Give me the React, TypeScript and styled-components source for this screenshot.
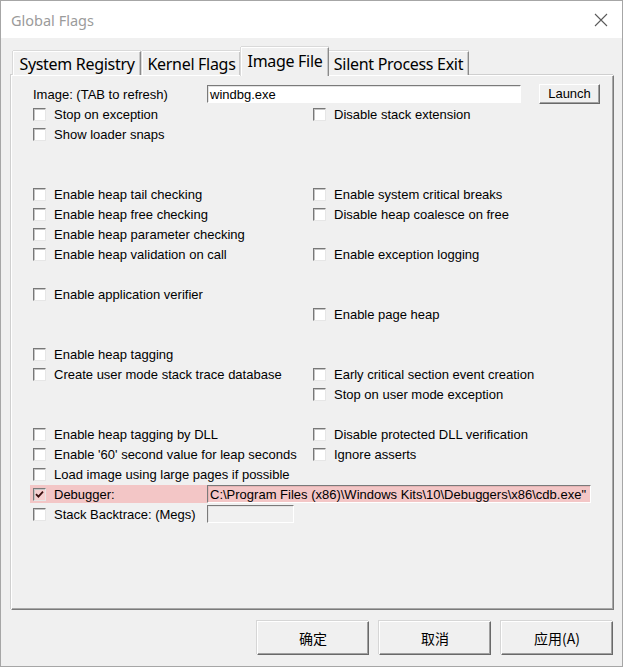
import React from "react"
import styled, { createGlobalStyle } from "styled-components"

const GlobalStyle = createGlobalStyle`
  html, body {
    margin: 0;
    padding: 0;
    background: #ffffff;
  }
  * {
    box-sizing: border-box;
  }
`

type Flag = string | null

const flagRows: [Flag, Flag][] = [
  ["Stop on exception", "Disable stack extension"],
  ["Show loader snaps", null],
  [null, null],
  [null, null],
  ["Enable heap tail checking", "Enable system critical breaks"],
  ["Enable heap free checking", "Disable heap coalesce on free"],
  ["Enable heap parameter checking", null],
  ["Enable heap validation on call", "Enable exception logging"],
  [null, null],
  ["Enable application verifier", null],
  [null, "Enable page heap"],
  [null, null],
  ["Enable heap tagging", null],
  ["Create user mode stack trace database", "Early critical section event creation"],
  [null, "Stop on user mode exception"],
  [null, null],
  ["Enable heap tagging by DLL", "Disable protected DLL verification"],
  ["Enable '60' second value for leap seconds", "Ignore asserts"],
  ["Load image using large pages if possible", null],
]

const tabs = [
  { label: "System Registry", width: 128 },
  { label: "Kernel Flags", width: 99 },
  { label: "Image File", width: 88 },
  { label: "Silent Process Exit", width: 141 },
]

const App = () => {
  return (
    <>
      <GlobalStyle />
      <Window>
        <TitleBar>
          <Title>Global Flags</Title>
          <CloseIcon width="14" height="14" viewBox="0 0 14 14">
            <path d="M1 1 L13 13 M13 1 L1 13" stroke="#5a5a5a" strokeWidth="1.1" fill="none" />
          </CloseIcon>
        </TitleBar>

        <Body>
          <TabStrip>
            {tabs.map((t) => (
              <Tab key={t.label} $active={t.label === "Image File"} $width={t.width}>
                {t.label}
              </Tab>
            ))}
          </TabStrip>

          <Panel>
            <FieldRow>
              <FieldLabel>Image: (TAB to refresh)</FieldLabel>
              <TextField $width={314}>windbg.exe</TextField>
              <SmallButton>Launch</SmallButton>
            </FieldRow>

            {flagRows.map(([left, right], i) => (
              <FlagRow key={i}>
                <Cell>{left && <CheckItem label={left} />}</Cell>
                <Cell>{right && <CheckItem label={right} />}</Cell>
              </FlagRow>
            ))}

            <DebuggerRow>
              <LabelBlock>
                <CheckBox $tint>
                  <svg width="9" height="9" viewBox="0 0 9 9">
                    <path d="M1 4.2 L3.4 6.6 L8 1.6" stroke="#3a1010" strokeWidth="1.8" fill="none" />
                  </svg>
                </CheckBox>
                <CheckLabel>Debugger:</CheckLabel>
              </LabelBlock>
              <TextField $width={384} $tint>
                C:\Program Files (x86)\Windows Kits\10\Debuggers\x86\cdb.exe"
              </TextField>
            </DebuggerRow>

            <FieldRow>
              <LabelBlock>
                <CheckBox />
                <CheckLabel>Stack Backtrace: (Megs)</CheckLabel>
              </LabelBlock>
              <TextField $width={87} $disabled />
            </FieldRow>
          </Panel>

          <ButtonBar>
            <DialogButton>确定</DialogButton>
            <DialogButton>取消</DialogButton>
            <DialogButton>应用(A)</DialogButton>
          </ButtonBar>
        </Body>
      </Window>
    </>
  )
}

const CheckItem = ({ label }: { label: string }) => (
  <CheckRow>
    <CheckBox />
    <CheckLabel>{label}</CheckLabel>
  </CheckRow>
)

export default App

const Window = styled.div`
  width: 623px;
  height: 667px;
  display: flex;
  flex-direction: column;
  border: 1px solid #a6a6a6;
  background: #f0f0f0;
  overflow: hidden;
`

const TitleBar = styled.div`
  height: 37px;
  flex: none;
  display: flex;
  align-items: center;
  justify-content: space-between;
  background: #ffffff;
  padding: 0 14px 0 10px;
`

const Title = styled.div`
  font-family: "Noto Sans", "Open Sans", sans-serif;
  font-size: 14.5px;
  color: #9b9b9b;
  margin-top: 1px;
`

const CloseIcon = styled.svg`
  display: block;
`

const Body = styled.div`
  flex: 1;
  display: flex;
  flex-direction: column;
  padding: 9px 9px 0 10px;
  font-family: "Liberation Sans", Arial, sans-serif;
  font-size: 13px;
  color: #000;
`

const TabStrip = styled.div`
  height: 28px;
  display: flex;
  align-items: flex-end;
  padding-left: 2px;
  position: relative;
  z-index: 1;
`

const Tab = styled.div<{ $active?: boolean; $width: number }>`
  width: ${(p) => p.$width}px;
  height: ${(p) => (p.$active ? 29 : 24)}px;
  margin: ${(p) => (p.$active ? "0 -1px -1px -1px" : "0 1px 0 0")};
  display: flex;
  align-items: center;
  justify-content: center;
  padding-bottom: ${(p) => (p.$active ? 3 : 0)}px;
  font-family: "Noto Sans", "Open Sans", sans-serif;
  font-size: 16px;
  letter-spacing: -0.3px;
  color: #000;
  background: #f0f0f0;
  border-top: 1px solid #ffffff;
  border-left: 1px solid #ffffff;
  border-right: 1px solid #8a8a8a;
  box-shadow: inset -1px 0 0 #c8c8c8, 0 -1px 0 #d9d9d9, -1px 0 0 #d9d9d9;
  position: relative;
  z-index: ${(p) => (p.$active ? 2 : 1)};
`

const Panel = styled.div`
  width: 603px;
  height: 535px;
  flex: none;
  border-top: 1px solid #ffffff;
  border-left: 1px solid #ffffff;
  border-right: 1px solid #7a7a7a;
  border-bottom: 1px solid #7a7a7a;
  box-shadow: -1px -1px 0 #cfcfcf, inset -1px -1px 0 #a8a8a8;
  padding: 8px 0 0 21px;
  display: flex;
  flex-direction: column;
`

const FieldRow = styled.div`
  height: 20px;
  display: flex;
  align-items: center;
`

const FieldLabel = styled.div`
  width: 174px;
  white-space: nowrap;
`

const TextField = styled.div<{ $width: number; $tint?: boolean; $disabled?: boolean }>`
  width: ${(p) => p.$width}px;
  height: 18px;
  flex: none;
  display: flex;
  align-items: center;
  padding-left: 2px;
  white-space: nowrap;
  overflow: hidden;
  background: ${(p) => (p.$tint ? "#f3c6c6" : p.$disabled ? "#f0f0f0" : "#ffffff")};
  border-top: 1px solid #7a7a7a;
  border-left: 1px solid #7a7a7a;
  border-right: 1px solid #ffffff;
  border-bottom: 1px solid #ffffff;
  box-shadow: inset 1px 1px 0 ${(p) => (p.$tint ? "#e6b5b5" : "#e3e3e3")};
`

const SmallButton = styled.div`
  width: 61px;
  height: 20px;
  margin-left: 18px;
  display: flex;
  align-items: center;
  justify-content: center;
  padding-bottom: 1px;
  background: #f0f0f0;
  border-top: 1px solid #ffffff;
  border-left: 1px solid #ffffff;
  border-right: 1px solid #696969;
  border-bottom: 1px solid #696969;
  box-shadow: inset -1px -1px 0 #a0a0a0;
`

const FlagRow = styled.div`
  height: 20px;
  display: grid;
  grid-template-columns: 280px 1fr;
  align-items: center;
`

const Cell = styled.div`
  min-width: 0;
`

const CheckRow = styled.div`
  display: flex;
  align-items: center;
  gap: 8px;
`

const LabelBlock = styled.div`
  width: 174px;
  flex: none;
  display: flex;
  align-items: center;
  gap: 8px;
`

const CheckBox = styled.div<{ $tint?: boolean }>`
  width: 13px;
  height: 13px;
  flex: none;
  display: flex;
  align-items: center;
  justify-content: center;
  background: ${(p) => (p.$tint ? "#f6d0d0" : "#ffffff")};
  border-top: 1px solid #787878;
  border-left: 1px solid #787878;
  border-right: 1px solid #e6e6e6;
  border-bottom: 1px solid #e6e6e6;
  box-shadow: inset 1px 1px 0 #c4c4c4;
`

const CheckLabel = styled.span`
  white-space: nowrap;
`

const DebuggerRow = styled.div`
  height: 18px;
  width: 561px;
  margin: 1px 0 1px -3px;
  padding-left: 3px;
  display: flex;
  align-items: center;
  background: #f3c6c6;
`

const ButtonBar = styled.div`
  display: flex;
  justify-content: flex-end;
  gap: 10px;
  margin-top: 11px;
`

const DialogButton = styled.div`
  width: 112px;
  height: 34px;
  display: flex;
  align-items: center;
  justify-content: center;
  font-family: "Noto Sans CJK SC", "Noto Sans", sans-serif;
  font-size: 14px;
  color: #000;
  background: #f0f0f0;
  border-top: 1px solid #ffffff;
  border-left: 1px solid #ffffff;
  border-right: 1px solid #696969;
  border-bottom: 1px solid #696969;
  box-shadow: inset -1px -1px 0 #a0a0a0, -1px -1px 0 #d6d6d6;
`
